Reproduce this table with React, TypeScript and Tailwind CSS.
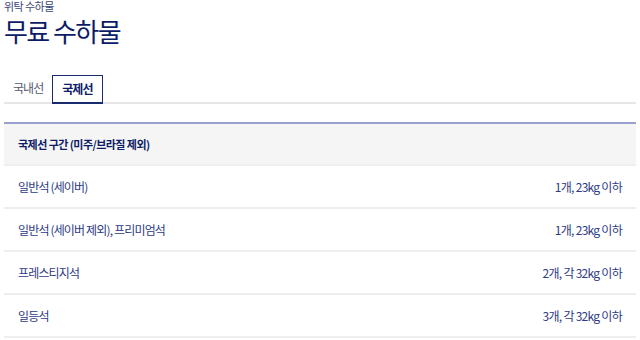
const rows = [
    { seat: '일반석 (세이버)', allow: '1개, 23kg 이하' },
    { seat: '일반석 (세이버 제외), 프리미엄석', allow: '1개, 23kg 이하' },
    { seat: '프레스티지석', allow: '2개, 각 32kg 이하' },
    { seat: '일등석', allow: '3개, 각 32kg 이하' },
]

const App = () => {
    return (
        <div className="w-[640px] h-[340px] overflow-hidden bg-white px-[4px] font-['Noto_Sans_CJK_KR','Noto_Sans',sans-serif]">
            <p className="text-[11px] leading-[13px] tracking-[-0.05em] text-[#3b4575]">위탁 수하물</p>
            <h2 className="mt-[2px] text-[26px] leading-[32px] tracking-[-0.06em] text-[#0c1c66]">무료 수하물</h2>

            <div className="mt-[27px] flex items-end border-b-2 border-[#e6e6e6]">
                <button className="h-[28px] px-[9px] text-[12px] tracking-[-0.08em] text-[#555a70]">국내선</button>
                <button className="h-[29px] -mb-[2px] px-[9px] text-[12px] tracking-[-0.08em] font-bold text-[#0c1c66] border border-[#1a2a6e] border-b-2">국제선</button>
            </div>

            <div className="mt-[18px] border-t-2 border-[#9aa0cc]">
                <div className="h-[42px] flex items-center px-[14px] bg-[#f5f5f5] border-b-2 border-[#eeeeee]">
                    <span className="text-[11px] tracking-[-0.05em] font-bold text-[#0c1c66]">국제선 구간 (미주/브라질 제외)</span>
                </div>
                {rows.map((r) => (
                    <div key={r.seat} className="h-[43px] flex items-center justify-between px-[14px] border-b-2 border-[#eeeeee]">
                        <span className="text-[12px] tracking-[-0.07em] text-[#2d3b84]">{r.seat}</span>
                        <span className="text-[12px] tracking-[-0.06em] text-[#2d3b84]">{r.allow}</span>
                    </div>
                ))}
            </div>
        </div>
    )
}

export default App
